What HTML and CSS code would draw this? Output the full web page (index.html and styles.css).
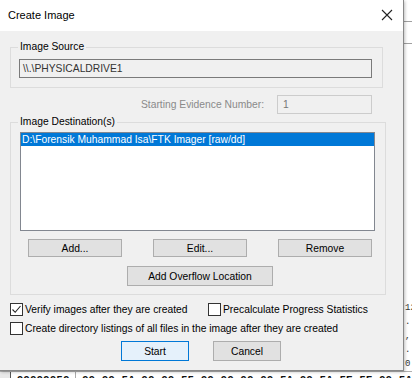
FILE: index.html
```html
<!DOCTYPE html>
<html lang="en">
<head>
    <meta charset="UTF-8">
    <title>Create Image</title>
    <link rel="stylesheet" href="styles.css">
</head>
<body>
    <!-- Background application (hex view) -->
    <div class="desktop">
        <div class="side-lines">
            <div class="side-line"></div>
            <div class="side-line"></div>
        </div>
        <div class="side-hex">
            <span>12</span>
            <span>.</span>
            <span>,</span>
            <span>.:</span>
            <span>0</span>
        </div>
        <div class="hex-row">
            <span class="hex-gutter"></span>
            <span class="hex-offset">00000050</span>
            <span class="hex-bytes">00 00 5A 00 00 55 00 00 00 00 5A 00 5A 5E 5F 00 5A</span>
        </div>
    </div>

    <!-- Dialog window -->
    <div class="dialog">
        <div class="titlebar">
            <span class="title">Create Image</span>
            <svg class="close" width="12" height="12" viewBox="0 0 12 12">
                <path d="M1 1 L11 11 M11 1 L1 11" stroke="#222" stroke-width="1.1" fill="none"/>
            </svg>
        </div>

        <div class="body">
            <fieldset class="group source">
                <legend>Image Source</legend>
                <div class="field">\\.\PHYSICALDRIVE1</div>
            </fieldset>

            <div class="evidence">
                <span class="evidence-label">Starting Evidence Number:</span>
                <div class="evidence-field">1</div>
            </div>

            <fieldset class="group dest">
                <legend>Image Destination(s)</legend>
                <div class="listbox">
                    <div class="list-item selected">D:\Forensik Muhammad Isa\FTK Imager [raw/dd]</div>
                </div>
                <div class="btn-row">
                    <button class="btn">Add...</button>
                    <button class="btn">Edit...</button>
                    <button class="btn">Remove</button>
                </div>
                <div class="btn-center">
                    <button class="btn overflow">Add Overflow Location</button>
                </div>
            </fieldset>

            <div class="checks">
                <label class="check first">
                    <span class="box checked">
                        <svg width="11" height="11" viewBox="0 0 11 11">
                            <path d="M1.5 5.5 L4.2 8.3 L9.5 2" stroke="#222" stroke-width="1.1" fill="none"/>
                        </svg>
                    </span>
                    Verify images after they are created
                </label>
                <label class="check">
                    <span class="box"></span>
                    Precalculate Progress Statistics
                </label>
            </div>
            <label class="check">
                <span class="box"></span>
                Create directory listings of all files in the image after they are created
            </label>

            <div class="actions">
                <button class="btn action default">Start</button>
                <button class="btn action">Cancel</button>
            </div>
        </div>
    </div>
</body>
</html>
```

FILE: styles.css
```css
/* General Styles */
body {
    margin: 0;
    width: 412px;
    height: 378px;
    overflow: hidden;
    position: relative;
    background: #fff;
    font-family: 'Liberation Sans', Arial, sans-serif;
    font-size: 10.3px;
    color: #000;
}

/* Background hex view */
.desktop {
    width: 412px;
    height: 378px;
    position: relative;
}

.side-lines {
    position: absolute;
    left: 404px;
    top: 0;
    width: 8px;
}

.side-line {
    height: 21px;
    border-bottom: 1px solid #a0a0a0;
}

.side-hex {
    position: absolute;
    left: 405px;
    top: 304px;
    display: flex;
    flex-direction: column;
    gap: 6px;
    font-family: 'Liberation Mono', monospace;
    font-size: 9px;
    line-height: 8px;
    color: #333;
}

.hex-row {
    position: absolute;
    left: 0;
    top: 371px;
    width: 412px;
    height: 7px;
    display: flex;
    background: #fff;
    border-top: 1px solid #b0b0b0;
    overflow: hidden;
    font-family: 'Liberation Mono', monospace;
    font-size: 11px;
    line-height: 16px;
    color: #111;
}

.hex-gutter {
    width: 11px;
    background: #e8e8e8;
    border-right: 1px solid #555;
}

.hex-offset {
    width: 66px;
    padding-left: 6px;
    border-right: 1px solid #aaa;
    font-weight: bold;
}

.hex-bytes {
    padding-left: 6px;
    white-space: nowrap;
    font-weight: bold;
}

/* Dialog */
.dialog {
    position: absolute;
    left: 0;
    top: 0;
    width: 403px;
    height: 370px;
    background: #f0f0f0;
    border-right: 1px solid #888;
    border-bottom: 1px solid #888;
    box-shadow: 1px 1px 3px rgba(0, 0, 0, 0.25);
}

.titlebar {
    height: 31px;
    background: #fff;
    display: flex;
    align-items: center;
    justify-content: space-between;
    padding: 0 10px 0 8px;
}

.title {
    font-family: 'Liberation Sans', Arial, sans-serif;
    font-size: 11px;
    color: #000;
    margin-top: -1px;
}

.close {
    margin-top: -1px;
}

.body {
    padding: 10px 0 0 10px;
}

.group {
    width: 372px;
    box-sizing: border-box;
    margin: 0;
    border: 1px solid #dcdcdc;
    border-radius: 0;
    padding: 0 10px 0 8px;
}

.group legend {
    padding: 0 2px;
    margin-left: -1px;
    color: #000;
    line-height: 12px;
}

.source {
    height: 47px;
}

.field {
    margin-top: 6px;
    width: 353px;
    height: 19px;
    box-sizing: border-box;
    border: 1px solid #7a7a7a;
    background: #f0f0f0;
    padding: 3px 0 0 3px;
    color: #333;
}

.evidence {
    display: flex;
    align-items: center;
    justify-content: flex-end;
    width: 362px;
    margin-top: 7px;
    height: 19px;
}

.evidence-label {
    color: #8a8a8a;
    margin-right: 13px;
}

.evidence-field {
    width: 95px;
    height: 19px;
    box-sizing: border-box;
    border: 1px solid #ccc;
    padding: 3px 0 0 5px;
    color: #777;
}

.dest {
    margin-top: 2px;
    height: 179px;
}

.listbox {
    margin-top: 4px;
    width: 355px;
    height: 99px;
    box-sizing: border-box;
    border: 1px solid #828790;
    background: #fff;
    margin-left: 1px;
}

.list-item {
    height: 13px;
    line-height: 13px;
    padding-left: 1px;
    white-space: nowrap;
}

.list-item.selected {
    background: #0078d7;
    color: #fff;
}

.btn-row {
    display: flex;
    justify-content: space-between;
    padding: 0 3px 0 9px;
    margin-top: 8px;
}

.btn {
    font-family: 'Liberation Sans', Arial, sans-serif;
    font-size: 10.3px;
    color: #000;
    background: #e1e1e1;
    border: 1px solid #adadad;
    width: 94px;
    height: 18px;
    padding: 0;
    margin: 0;
}

.btn-center {
    display: flex;
    justify-content: center;
    margin-top: 9px;
    padding-left: 6px;
}

.btn.overflow {
    width: 146px;
    height: 20px;
}

.checks {
    display: flex;
    margin-top: 7px;
}

.check {
    display: flex;
    align-items: center;
    height: 14px;
    gap: 2px;
    white-space: nowrap;
}

.check.first {
    width: 198px;
}

.checks + .check {
    margin-top: 5px;
}

.box {
    width: 13px;
    height: 13px;
    box-sizing: border-box;
    border: 1px solid #333;
    background: #fff;
    display: flex;
    align-items: center;
    justify-content: center;
}

.actions {
    display: flex;
    gap: 24px;
    margin-top: 6px;
    padding-left: 111px;
}

.btn.action {
    width: 68px;
    height: 20px;
}

.btn.default {
    background: #e5f1fb;
    border-color: #0078d7;
}
```
